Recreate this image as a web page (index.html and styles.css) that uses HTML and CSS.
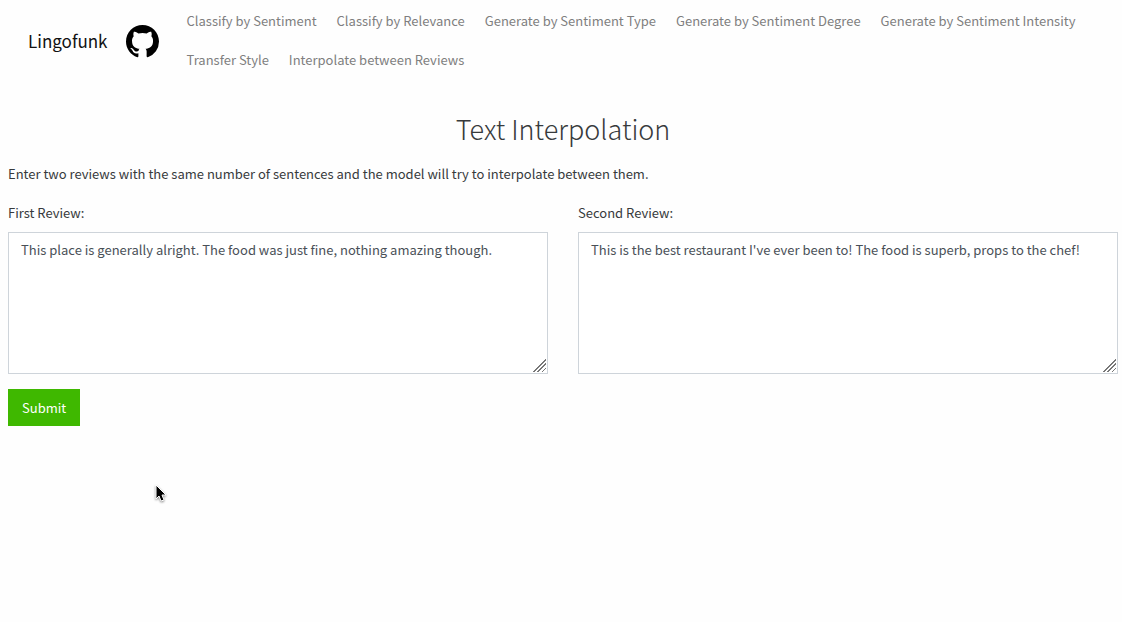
FILE: index.html
```html
<!DOCTYPE html>
<html lang="en">
<head>
<meta charset="utf-8">
<meta name="viewport" content="width=device-width, initial-scale=1">
<title>Lingofunk</title>
<link rel="stylesheet" href="styles.css">
</head>
<body>
<header class="navbar">
  <a class="brand" href="#">Lingofunk</a>
  <a class="github" href="#" aria-label="GitHub">
    <svg class="github-icon" viewBox="0 0 16 16" aria-hidden="true"><path d="M8 0C3.58 0 0 3.58 0 8c0 3.54 2.29 6.53 5.47 7.59.4.07.55-.17.55-.38 0-.19-.01-.82-.01-1.49-2.01.37-2.53-.49-2.69-.94-.09-.23-.48-.94-.82-1.13-.28-.15-.68-.52-.01-.53.63-.01 1.08.58 1.23.82.72 1.21 1.87.87 2.33.66.07-.52.28-.87.51-1.07-1.78-.2-3.64-.89-3.64-3.95 0-.87.31-1.59.82-2.15-.08-.2-.36-1.02.08-2.12 0 0 .67-.21 2.2.82.64-.18 1.32-.27 2-.27s1.36.09 2 .27c1.53-1.04 2.2-.82 2.2-.82.44 1.1.16 1.92.08 2.12.51.56.82 1.27.82 2.15 0 3.07-1.87 3.75-3.65 3.95.29.25.54.73.54 1.48 0 1.07-.01 1.93-.01 2.2 0 .21.15.46.55.38A8.01 8.01 0 0 0 16 8c0-4.42-3.58-8-8-8z"/></svg>
  </a>
  <nav class="nav">
    <a class="nav-link" href="#">Classify by Sentiment</a>
    <a class="nav-link" href="#">Classify by Relevance</a>
    <a class="nav-link" href="#">Generate by Sentiment Type</a>
    <a class="nav-link" href="#">Generate by Sentiment Degree</a>
    <a class="nav-link" href="#">Generate by Sentiment Intensity</a>
    <a class="nav-link" href="#">Transfer Style</a>
    <a class="nav-link" href="#">Interpolate between Reviews</a>
  </nav>
</header>
<main class="content">
  <h1 class="title">Text Interpolation</h1>
  <p class="intro">Enter two reviews with the same number of sentences and the model will try to interpolate between them.</p>
  <form class="form">
    <div class="reviews">
      <div class="field">
        <label class="label" for="first">First Review:</label>
        <textarea class="review" id="first" spellcheck="false">This place is generally alright. The food was just fine, nothing amazing though.</textarea>
      </div>
      <div class="field">
        <label class="label" for="second">Second Review:</label>
        <textarea class="review" id="second" spellcheck="false">This is the best restaurant I've ever been to! The food is superb, props to the chef!</textarea>
      </div>
    </div>
    <button class="submit" type="button">Submit</button>
  </form>
</main>
<svg class="pointer" viewBox="0 0 12 18" aria-hidden="true"><path d="M1 1v14l3-3 2 5 3-1-2-5h4z"/></svg>
</body>
</html>
```
FILE: styles.css
```css
* {
  box-sizing: border-box;
}

body {
  margin: 0;
  background: #fefefe;
  color: #373a3c;
  font: 13px/24px "Source Sans Pro", "Noto Sans CJK SC", sans-serif;
}

.navbar {
  display: flex;
  align-items: center;
  padding: 2px 20px 0 28px;
}

.brand {
  margin-right: 18px;
  color: #111;
  font-size: 17px;
  text-decoration: none;
}

.github {
  display: flex;
  margin-right: 18px;
}

.github-icon {
  width: 33px;
  height: 33px;
}

.nav {
  display: flex;
  flex: 1;
  flex-wrap: wrap;
}

.nav-link {
  padding: 7px 10px 8px;
  color: #7f7f7f;
  text-decoration: none;
}

.content {
  padding: 29px 4px 0 8px;
}

.title {
  margin: 0 0 13px;
  font-size: 27px;
  font-weight: 300;
  line-height: 40px;
  text-align: center;
}

.intro {
  margin: 0 0 15px;
}

.reviews {
  display: grid;
  grid-template-columns: 1fr 1fr;
  gap: 30px;
}

.field {
  display: flex;
  flex-direction: column;
  gap: 7px;
}

.review {
  width: 100%;
  height: 142px;
  padding: 5px 12px;
  border: 1px solid #ced4da;
  border-radius: 0;
  outline: 0;
  background: #fff;
  color: #495057;
  font: inherit;
  resize: vertical;
}

.review::-webkit-resizer {
  background: linear-gradient(135deg, transparent 9px, #777 9px 10px, transparent 10px 12px, #777 12px 13px, transparent 13px 15px, #777 15px 16px, transparent 16px) right 1px bottom 1px / 13px 13px no-repeat;
}

.submit {
  margin-top: 15px;
  padding: 6px 14px;
  border: 0;
  background: #3fb800;
  color: #fff;
  font: inherit;
  line-height: 25px;
}

.pointer {
  position: absolute;
  top: 484px;
  left: 155px;
  width: 12px;
  height: 18px;
  fill: #000;
  stroke: #fff;
  filter: drop-shadow(0 1px 1px #888);
}
```
